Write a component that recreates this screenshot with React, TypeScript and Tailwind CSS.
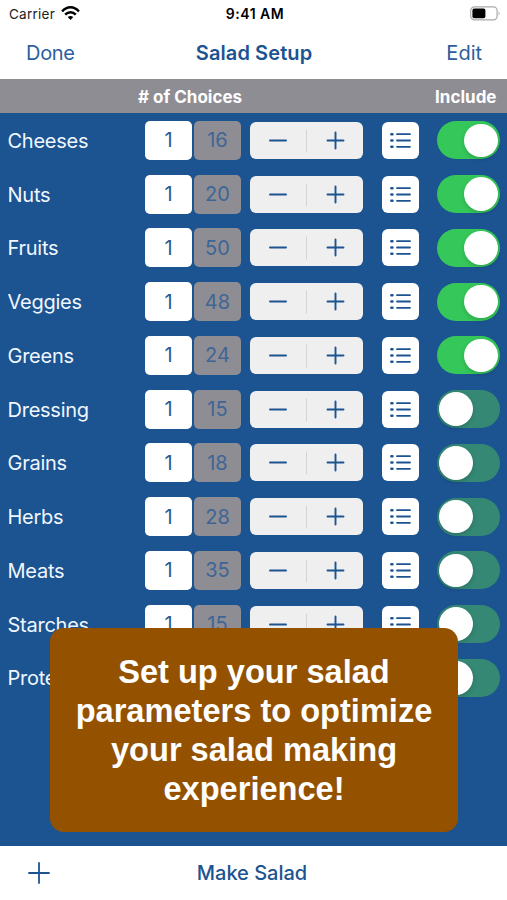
type Ingredient = { name: string; total?: number; included: boolean };

const ingredients: Ingredient[] = [
  { name: "Cheeses", total: 16, included: true },
  { name: "Nuts", total: 20, included: true },
  { name: "Fruits", total: 50, included: true },
  { name: "Veggies", total: 48, included: true },
  { name: "Greens", total: 24, included: true },
  { name: "Dressing", total: 15, included: false },
  { name: "Grains", total: 18, included: false },
  { name: "Herbs", total: 28, included: false },
  { name: "Meats", total: 35, included: false },
  { name: "Starches", total: 15, included: false },
  { name: "Proteins", included: false },
];

function StatusBar() {
  return (
    <div className="flex h-[28px] items-center justify-between pl-[9px] pr-[6px] text-[13.5px] leading-none text-[#222]">
      <div className="flex flex-1 items-center gap-[6px]">
        <span className="pt-px tracking-[0.25px]">Carrier</span>
        <svg className="-mt-[2px]" width="19" height="15" viewBox="0 0 19 15" fill="none" stroke="#000" strokeWidth="2.5">
          <path d="M1.1 5.5C6-.1 13-.1 17.9 5.5" />
          <path d="M4.2 8.7C7.3 5.4 11.7 5.4 14.8 8.7" />
          <path d="M9.5 14 6.7 11.1Q9.5 8.7 12.3 11.1Z" fill="#000" stroke="none" />
        </svg>
      </div>
      <span className="text-[14px] font-semibold tracking-[0.5px] text-black">9:41 AM</span>
      <div className="flex flex-1 justify-end">
        <svg className="-mt-[2px]" width="31" height="15" viewBox="0 0 31 15">
          <rect x="0.7" y="0.9" width="26.4" height="13" rx="3.8" fill="none" stroke="#aaa" strokeWidth="1.2" />
          <rect x="2.4" y="2.6" width="13" height="9.6" rx="1.8" fill="#000" />
          <path d="M28.6 5.2Q30.6 7.4 28.6 9.6Z" fill="#aaa" />
        </svg>
      </div>
    </div>
  );
}

function Stepper() {
  return (
    <div className="ml-[9px] flex h-[37px] w-[113px] items-center rounded-[6px] bg-[#efeff0]">
      <svg width="113" height="37" viewBox="0 0 113 37" stroke="#1c5391" strokeWidth="1.9" strokeLinecap="round">
        <path d="M20 18.5H36M77.5 18.5H93.5M85.5 10.5V26.5" />
        <path d="M56.5 8V30" stroke="#d4d4d7" strokeWidth="1" />
      </svg>
    </div>
  );
}

function ListButton() {
  return (
    <div className="ml-[19px] flex size-[37px] items-center justify-center rounded-[6px] bg-white">
      <svg width="37" height="37" viewBox="0 0 37 37" stroke="#1c5391" strokeLinecap="round">
        <path d="M15 12.2H28M15 18.5H28M15 24.8H28" strokeWidth="1.8" />
        <path d="M9.3 12.2H10.5M9.3 18.5H10.5M9.3 24.8H10.5" strokeWidth="2.4" />
      </svg>
    </div>
  );
}

function Toggle({ on }: { on: boolean }) {
  return (
    <div
      className={`ml-[18px] flex h-[38px] w-[62.5px] items-center rounded-full px-[2px] ${
        on ? "justify-end bg-[#35c759]" : "justify-start bg-[#348874]"
      }`}
    >
      <div className="size-[33.5px] rounded-full bg-white shadow-[0_2px_4px_rgba(0,0,0,0.16)]" />
    </div>
  );
}

function Row({ item }: { item: Ingredient }) {
  return (
    <div className="flex h-[53.75px] items-center pl-[7.5px] text-[20px]">
      <span className="w-[137.5px] pt-px tracking-[-0.25px] text-[#f0f7ff]">{item.name}</span>
      <div className="flex h-[39px] w-[47px] items-center justify-center rounded-[5px] bg-white text-[#285b94]">1</div>
      <div className="ml-[2px] flex h-[39px] w-[47px] items-center justify-center rounded-[5px] bg-[#8e8d93] text-[#3f6596]">
        {item.total}
      </div>
      <Stepper />
      <ListButton />
      <Toggle on={item.included} />
    </div>
  );
}

export default function App() {
  return (
    <div className="relative flex h-[900px] w-[507px] flex-col overflow-hidden bg-white font-['Inter','Liberation_Sans',sans-serif]">
      <StatusBar />
      <div className="flex h-[51px] items-center justify-between pb-[2px] pl-[26px] pr-[25px] text-[20px] text-[#2b5f9e]">
        <span className="flex-1 tracking-[-0.3px]">Done</span>
        <span className="font-semibold tracking-[0.1px] text-[#1c5391]">Salad Setup</span>
        <span className="flex-1 text-right">Edit</span>
      </div>
      <div className="flex h-[34px] items-center justify-between bg-[#8e8d93] pl-[138px] pr-[10.5px] pt-[3px] text-[17px] font-bold text-white">
        <span>
          # of Choices
        </span>
        <span>Include</span>
      </div>
      <div className="flex h-[733px] flex-col bg-[#1c5391] pt-[0.6px]">
        {ingredients.map((item) => (
          <Row key={item.name} item={item} />
        ))}
      </div>
      <div className="flex h-[54px] items-center pl-[27.7px] pr-[30.7px]">
        <div className="flex-1">
          <svg width="22" height="22" viewBox="0 0 22 22" stroke="#1c5391" strokeWidth="1.8" strokeLinecap="round">
            <path d="M1 11H21M11 1V21" />
          </svg>
        </div>
        <span className="text-[20px] font-medium text-[#1c5391]">Make Salad</span>
        <div className="flex-1" />
      </div>
      <div className="absolute left-[50px] top-[628px] flex h-[204px] w-[408px] items-center justify-center rounded-[14px] bg-[#945200] text-center font-['Liberation_Sans',sans-serif] text-[32.6px] font-bold leading-[39.2px] text-white">
        <p>
          Set up your salad
          <br />
          parameters to optimize
          <br />
          your salad making
          <br />
          experience!
        </p>
      </div>
    </div>
  );
}
